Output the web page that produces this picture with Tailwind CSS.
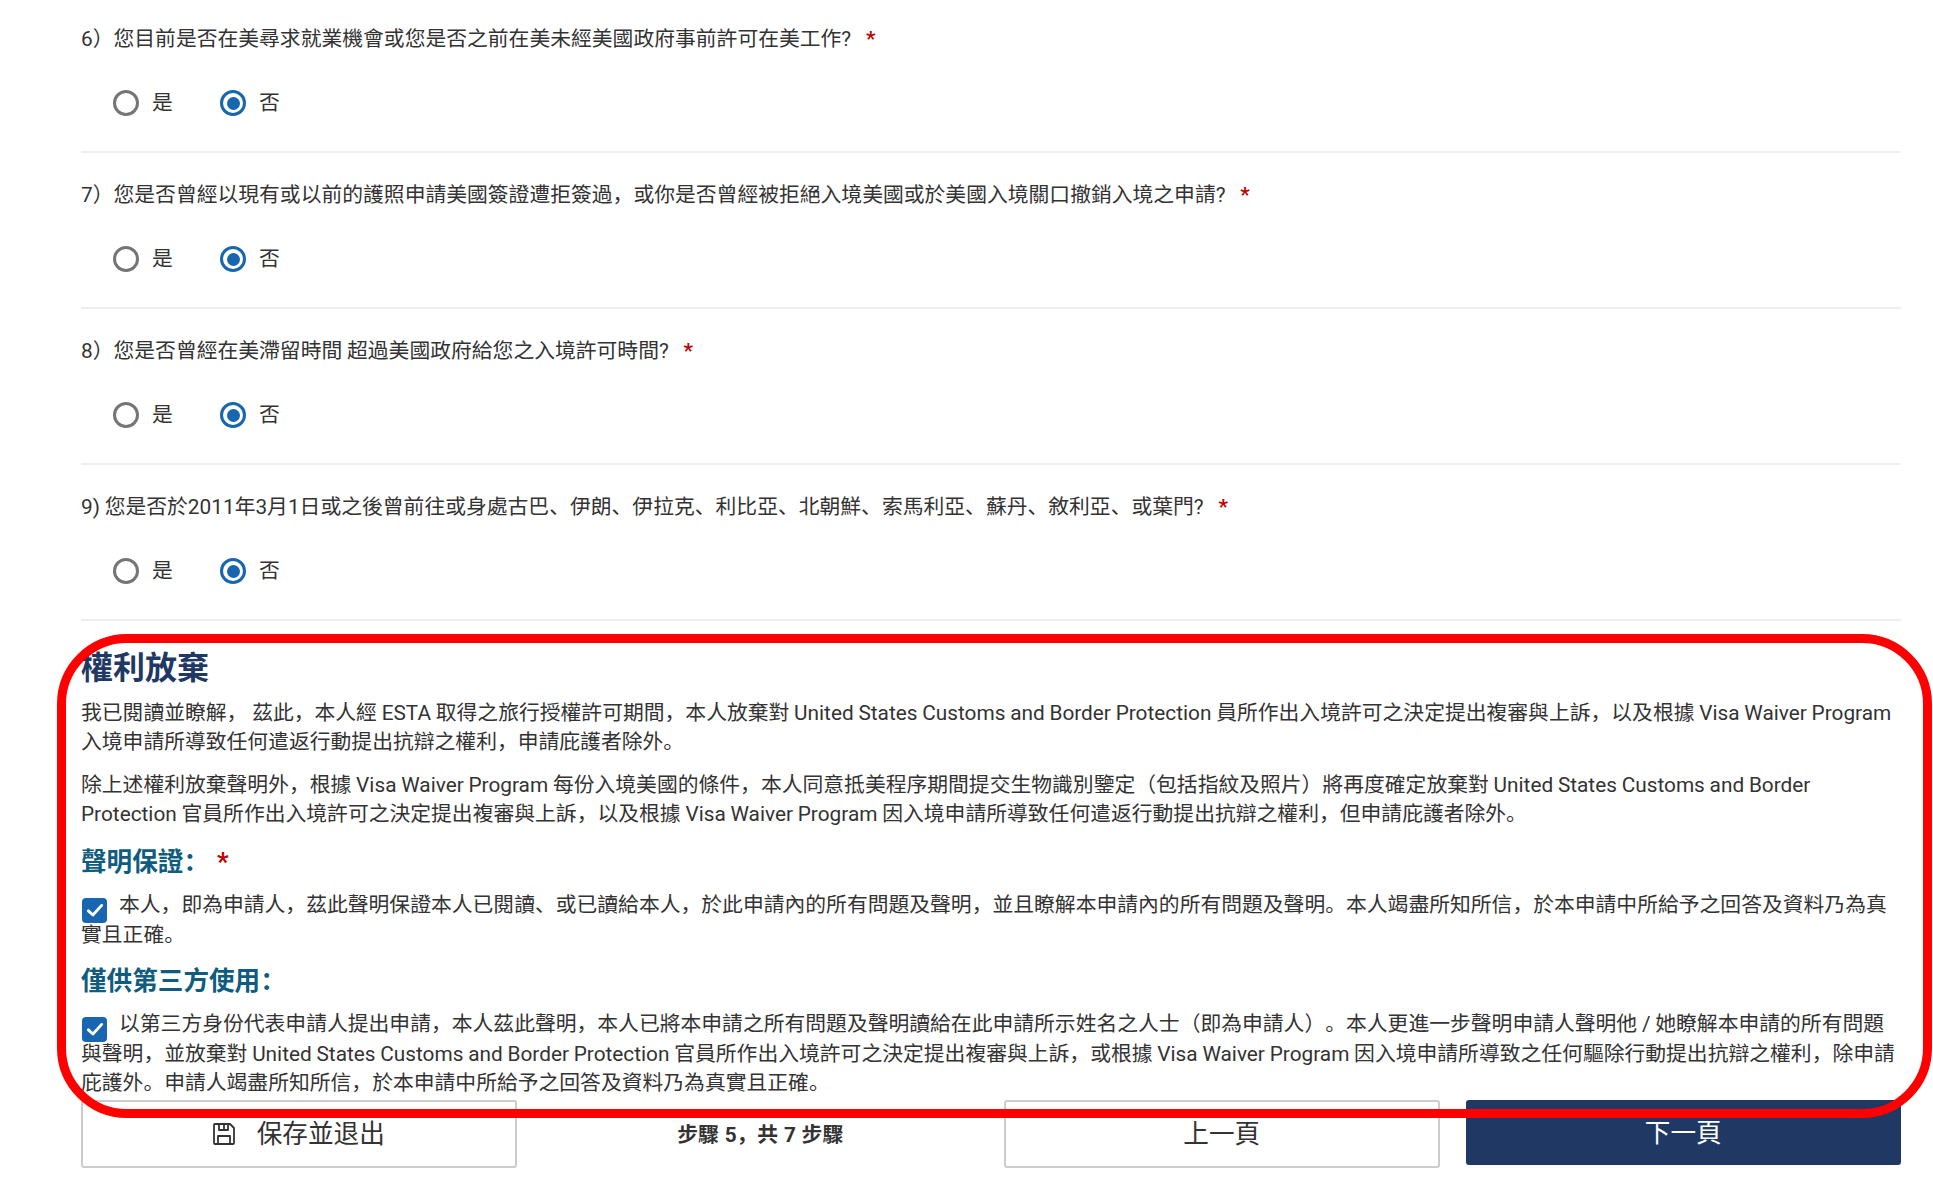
<!doctype html>
<html>
<head>
<meta charset="utf-8">
<title>ESTA</title>
<script src="https://cdn.jsdelivr.net/npm/@tailwindcss/browser@4"></script>
</head>
<body class="bg-white">
<div class="relative h-[1202px] w-[1933px] overflow-hidden pl-[81px] pr-[32px] pt-[24px] font-['Roboto','Noto_Sans_CJK_SC',sans-serif] text-[20.8px] leading-[30px] text-[#333] [text-spacing-trim:space-all] [word-spacing:-0.4px]">

  <section class="h-[129px] border-b-2 border-[#eee]">
    <p>6）您目前是否在美尋求就業機會或您是否之前在美未經美國政府事前許可在美工作? <span class="ml-[10px] font-bold text-[#c00000]">*</span></p>
    <div class="mt-[36px] flex h-[26px] items-center pl-[32px]">
      <span class="h-[26px] w-[26px] rounded-full border-[3px] border-[#757575]"></span>
      <span class="ml-[13px] w-[68px]">是</span>
      <span class="flex h-[26px] w-[26px] items-center justify-center rounded-full border-[3px] border-[#1866b0]"><span class="h-[13px] w-[13px] rounded-full bg-[#1866b0]"></span></span>
      <span class="ml-[13px]">否</span>
    </div>
  </section>

  <section class="mt-[24px] h-[132px] border-b-2 border-[#eee] pt-[3px]">
    <p>7）您是否曾經以現有或以前的護照申請美國簽證遭拒簽過，或你是否曾經被拒絕入境美國或於美國入境關口撤銷入境之申請? <span class="ml-[10px] font-bold text-[#c00000]">*</span></p>
    <div class="mt-[36px] flex h-[26px] items-center pl-[32px]">
      <span class="h-[26px] w-[26px] rounded-full border-[3px] border-[#757575]"></span>
      <span class="ml-[13px] w-[68px]">是</span>
      <span class="flex h-[26px] w-[26px] items-center justify-center rounded-full border-[3px] border-[#1866b0]"><span class="h-[13px] w-[13px] rounded-full bg-[#1866b0]"></span></span>
      <span class="ml-[13px]">否</span>
    </div>
  </section>

  <section class="mt-[24px] h-[132px] border-b-2 border-[#eee] pt-[3px]">
    <p>8）您是否曾經在美滯留時間 超過美國政府給您之入境許可時間? <span class="ml-[10px] font-bold text-[#c00000]">*</span></p>
    <div class="mt-[36px] flex h-[26px] items-center pl-[32px]">
      <span class="h-[26px] w-[26px] rounded-full border-[3px] border-[#757575]"></span>
      <span class="ml-[13px] w-[68px]">是</span>
      <span class="flex h-[26px] w-[26px] items-center justify-center rounded-full border-[3px] border-[#1866b0]"><span class="h-[13px] w-[13px] rounded-full bg-[#1866b0]"></span></span>
      <span class="ml-[13px]">否</span>
    </div>
  </section>

  <section class="mt-[24px] h-[132px] border-b-2 border-[#eee] pt-[3px]">
    <p>9) 您是否於2011年3月1日或之後曾前往或身處古巴、伊朗、伊拉克、利比亞、北朝鮮、索馬利亞、蘇丹、敘利亞、或葉門? <span class="ml-[10px] font-bold text-[#c00000]">*</span></p>
    <div class="mt-[36px] flex h-[26px] items-center pl-[32px]">
      <span class="h-[26px] w-[26px] rounded-full border-[3px] border-[#757575]"></span>
      <span class="ml-[13px] w-[68px]">是</span>
      <span class="flex h-[26px] w-[26px] items-center justify-center rounded-full border-[3px] border-[#1866b0]"><span class="h-[13px] w-[13px] rounded-full bg-[#1866b0]"></span></span>
      <span class="ml-[13px]">否</span>
    </div>
  </section>

  <h2 class="mt-[27px] text-[32px] font-bold leading-[40px] text-[#1f3864]">權利放棄</h2>
  <p class="mt-[11px] leading-[29px]">我已閱讀並瞭解， 茲此，本人經 ESTA 取得之旅行授權許可期間，本人放棄對 United States Customs and Border Protection 員所作出入境許可之決定提出複審與上訴，以及根據 Visa Waiver Program 入境申請所導致任何遣返行動提出抗辯之權利，申請庇護者除外。</p>
  <p class="mt-[14px] leading-[29px]">除上述權利放棄聲明外，根據 Visa Waiver Program 每份入境美國的條件，本人同意抵美程序期間提交生物識別鑒定（包括指紋及照片）將再度確定放棄對 United States Customs and Border Protection 官員所作出入境許可之決定提出複審與上訴，以及根據 Visa Waiver Program 因入境申請所導致任何遣返行動提出抗辯之權利，但申請庇護者除外。</p>

  <h3 class="mt-[17px] text-[25.6px] font-bold leading-[32px] text-[#0f5c7f]">聲明保證： <span class="ml-[2px] text-[#c00000]">*</span></h3>
  <p class="mt-[12px]"><span class="ml-[1px] mr-[12px] -mb-[8px] inline-flex h-[25px] w-[25px] items-center justify-center rounded-[4px] bg-[#1866b0] align-[-8px]"><svg viewBox="0 0 24 24" class="h-[20px] w-[20px]" fill="none" stroke="#fff" stroke-width="3.4" stroke-linecap="round" stroke-linejoin="round"><path d="M4 13l5.5 5L20 6.5"/></svg></span>本人，即為申請人，茲此聲明保證本人已閱讀、或已讀給本人，於此申請內的所有問題及聲明，並且瞭解本申請內的所有問題及聲明。本人竭盡所知所信，於本申請中所給予之回答及資料乃為真實且正確。</p>

  <h3 class="mt-[15px] text-[25.6px] font-bold leading-[32px] text-[#0f5c7f]">僅供第三方使用：</h3>
  <p class="mt-[13px] leading-[29.5px]"><span class="ml-[1px] mr-[12px] -mb-[8px] inline-flex h-[25px] w-[25px] items-center justify-center rounded-[4px] bg-[#1866b0] align-[-8px]"><svg viewBox="0 0 24 24" class="h-[20px] w-[20px]" fill="none" stroke="#fff" stroke-width="3.4" stroke-linecap="round" stroke-linejoin="round"><path d="M4 13l5.5 5L20 6.5"/></svg></span>以第三方身份代表申請人提出申請，本人茲此聲明，本人已將本申請之所有問題及聲明讀給在此申請所示姓名之人士（即為申請人）。本人更進一步聲明申請人聲明他 / 她瞭解本申請的所有問題與聲明，並放棄對 United States Customs and Border Protection 官員所作出入境許可之決定提出複審與上訴，或根據 Visa Waiver Program 因入境申請所導致之任何驅除行動提出抗辯之權利，除申請庇護外。申請人竭盡所知所信，於本申請中所給予之回答及資料乃為真實且正確。</p>

  <div class="absolute left-[81px] top-[1100px] grid w-[1820px] grid-cols-4 items-start gap-[26px]">
    <button class="flex h-[68px] items-center justify-center gap-[22px] rounded-[3px] border-2 border-[#ccc] bg-white text-[25.6px]">
      <svg viewBox="0 0 22 22" class="h-[22px] w-[22px]" fill="none" stroke="#333" stroke-width="1.8" stroke-linejoin="round"><path d="M2 1h15l4 4v15a1 1 0 0 1-1 1H2a1 1 0 0 1-1-1V2a1 1 0 0 1 1-1z"/><path d="M6 1v6h9V1M11 1v5" /><path d="M5 21v-8h12v8"/></svg>
      <span>保存並退出</span>
    </button>
    <div class="flex h-[70px] items-center justify-center text-[20.8px] font-bold [word-spacing:0.6px]">步驟 5，共 7 步驟</div>
    <button class="h-[68px] rounded-[3px] border-2 border-[#ccc] bg-white text-[25.6px]">上一頁</button>
    <button class="h-[65px] rounded-[3px] bg-[#1f3864] text-[25.6px] text-white">下一頁</button>
  </div>

  <div class="pointer-events-none absolute left-[57px] top-[634px] h-[484px] w-[1875px] rounded-[70px] border-[9px] border-[#fe0000]"></div>
</div>
</body>
</html>
